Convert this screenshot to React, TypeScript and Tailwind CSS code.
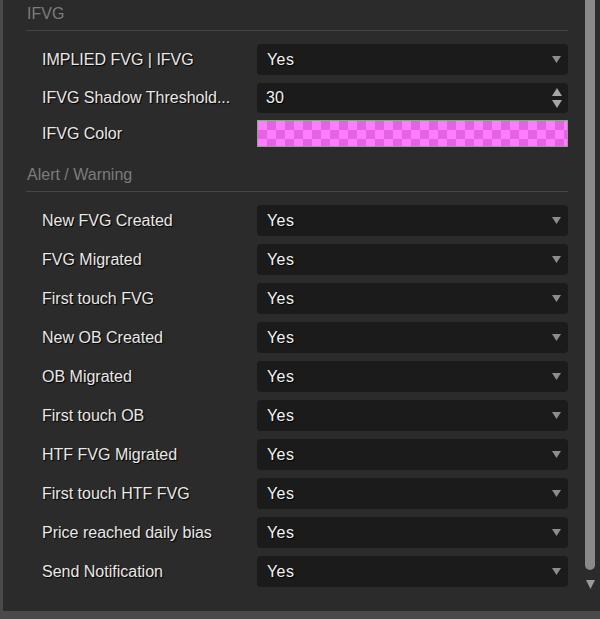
import React from "react";

function Arrow() {
  return (
    <svg width="9" height="7" viewBox="0 0 9 7" className="shrink-0">
      <polygon points="0,0 9,0 4.5,7" fill="#8d8d8d" />
    </svg>
  );
}

function Spinner() {
  return (
    <svg width="10" height="21" viewBox="0 0 10 21" className="shrink-0">
      <polygon points="5,0 10,8 0,8" fill="#a6a6a6" />
      <polygon points="0,12 10,12 5,20" fill="#a6a6a6" />
    </svg>
  );
}

function Header({ title }: { title: string }) {
  return (
    <div className="h-[31px] pt-[4px] pl-[1px] border-b border-[#464646] text-[16px] leading-[20px] text-[#7c7c7c]">
      {title}
    </div>
  );
}

function Label({ text }: { text: string }) {
  return (
    <div className="w-[231px] shrink-0 pl-[16px] pr-[4px] text-[16px] text-[#e8e8e8] whitespace-nowrap overflow-hidden [text-shadow:1px_1px_1px_#000]">
      {text}
    </div>
  );
}

function SelectRow({ label, value = "Yes" }: { label: string; value?: string }) {
  return (
    <div className="flex items-center h-[31px]">
      <Label text={label} />
      <div className="w-[311px] h-[31px] rounded-[4px] bg-[#1b1b1b] flex items-center justify-between pl-[10px] pr-[7px]">
        <span className="text-[16px] tracking-[0.4px] text-[#f2f2f2] [text-shadow:1px_1px_1px_#000]">{value}</span>
        <Arrow />
      </div>
    </div>
  );
}

export default function App() {
  const alerts = [
    "New FVG Created",
    "FVG Migrated",
    "First touch FVG",
    "New OB Created",
    "OB Migrated",
    "First touch OB",
    "HTF FVG Migrated",
    "First touch HTF FVG",
    "Price reached daily bias",
    "Send Notification",
  ];
  return (
    <div className="font-['Liberation_Sans',Arial,sans-serif] w-[600px] h-[619px] bg-[#4a4a4a] pl-[3px] pb-[8px] overflow-hidden">
      <div className="h-full bg-[#2b2b2b] flex">
        <div className="w-[565px] pl-[23px] shrink-0">
          <Header title="IFVG" />
          <div className="pt-[13px] flex flex-col">
            <SelectRow label="IMPLIED FVG | IFVG" />
            <div className="flex items-center h-[30px] mt-[8px]">
              <Label text="IFVG Shadow Threshold..." />
              <div className="w-[311px] h-[30px] rounded-[4px] bg-[#1b1b1b] flex items-center justify-between pl-[9px] pr-[6px]">
                <span className="text-[16px] text-[#f2f2f2] [text-shadow:1px_1px_1px_#000]">30</span>
                <Spinner />
              </div>
            </div>
            <div className="flex items-center h-[27px] mt-[7px]">
              <Label text="IFVG Color" />
              <div className="w-[311px] h-[27px] border border-[#9a9a9a] bg-[repeating-conic-gradient(#e562e5_0_25%,#fd7dfd_0_50%)] bg-size-[18px_18px]" />
            </div>
          </div>
          <div className="mt-[14px]">
            <Header title="Alert / Warning" />
          </div>
          <div className="pt-[13px] flex flex-col gap-[8px]">
            {alerts.map((a) => (
              <SelectRow key={a} label={a} />
            ))}
          </div>
        </div>
        <div className="flex-1 flex flex-col pl-[17px]">
          <div className="w-[10px] h-[570px] bg-[#8a8a8a] rounded-b-full" />
          <div className="mt-[10px] ml-[1px]">
            <svg width="9" height="9" viewBox="0 0 9 9">
              <polygon points="0,0 9,0 4.5,9" fill="#9a9a9a" />
            </svg>
          </div>
        </div>
      </div>
    </div>
  );
}
